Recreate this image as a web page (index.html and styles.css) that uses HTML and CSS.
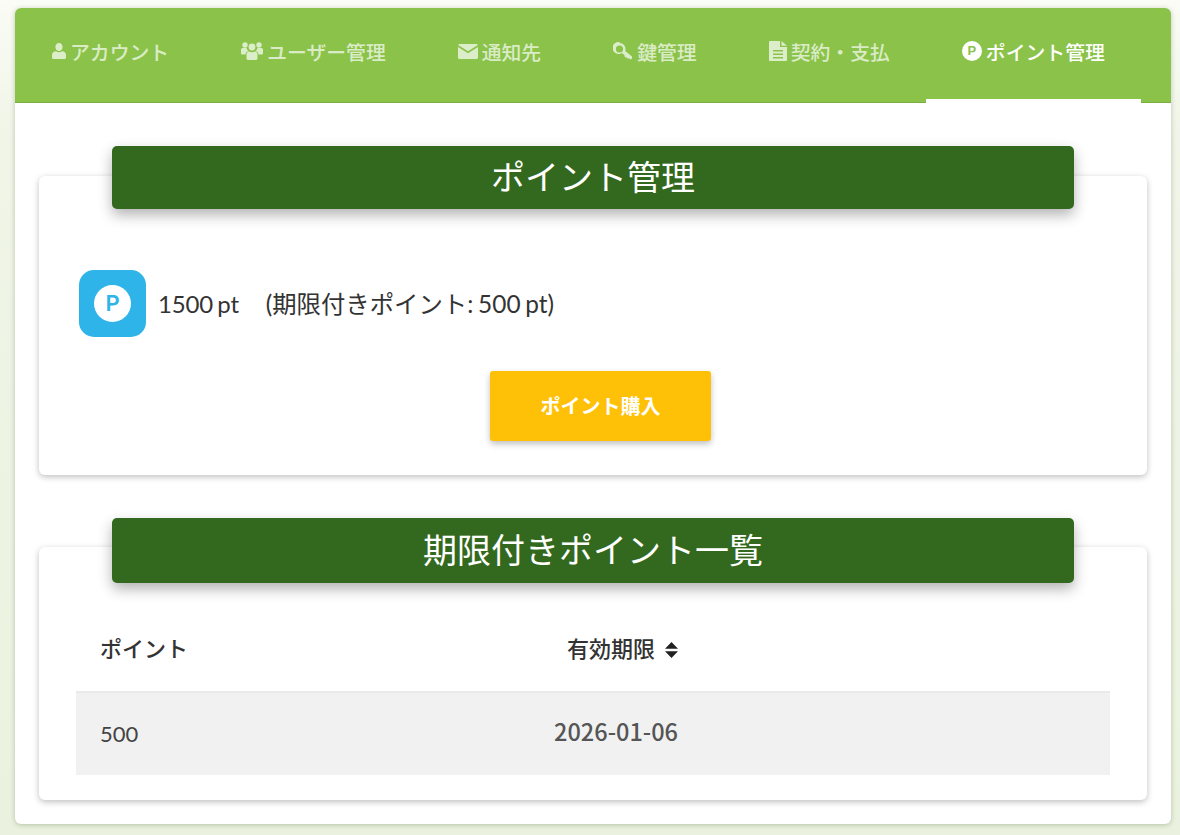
FILE: index.html
```html
<!DOCTYPE html>
<html lang="ja">
<head>
<meta charset="utf-8">
<title>ポイント管理</title>
<link rel="stylesheet" href="styles.css">
</head>
<body>
<div class="panel">
  <nav class="tabs">
    <a class="tab"><svg class="ic ic-user" viewBox="0 0 14 16"><path d="M7 0c2.200 0 3.600 1.700 3.600 4S9.200 8 7 8 3.400 6.300 3.400 4 4.800 0 7 0zM4 8.300c.8.600 1.900 1 3 1s2.200-.4 3-1c2.200.3 4 1.300 4 3.700v2.500c0 .8-.7 1.500-1.500 1.500h-11C.7 16 0 15.300 0 14.500V12c0-2.400 1.800-3.400 4-3.700z"/></svg><span>アカウント</span></a>
    <a class="tab"><svg class="ic ic-group" viewBox="0 0 22 18"><circle cx="11" cy="5" r="3.400"/><circle cx="4" cy="3" r="2.700"/><circle cx="18" cy="3" r="2.700"/><path d="M0 7.500C0 6.500 1 6 2 6h3.500c.4 1.200 1 2.200 2 3-2 .6-3 2-3.100 3.500H1.500C.6 12.500 0 12 0 11zM22 7.500C22 6.500 21 6 20 6h-3.500c-.4 1.200-1 2.200-2 3 2 .6 3 2 3.100 3.500h2.900c.9 0 1.500-.5 1.500-1.500zM8 9.500c1.800 1 4.200 1 6 0 1.600.3 2.500 1.300 2.500 3v3.700c0 1-.8 1.800-1.800 1.800H7.300c-1 0-1.800-.8-1.800-1.800v-3.700c0-1.700.9-2.700 2.500-3z"/></svg><span>ユーザー管理</span></a>
    <a class="tab"><svg class="ic ic-mail" viewBox="0 0 20 15"><path d="M1.500 0h17c.7 0 1.200.4 1.400 1L10 7.300.1 1C.3.400.8 0 1.500 0zM0 3l10 6.300L20 3v10.500c0 .8-.7 1.500-1.500 1.500h-17C.7 15 0 14.300 0 13.500z"/></svg><span>通知先</span></a>
    <a class="tab"><svg class="ic ic-key" viewBox="0 0 20 18"><path fill-rule="evenodd" d="M6.500 1a6 6 0 0 1 5.700 7.900l6.800 5.600v1.900l-1.600 1-1.500-1.200-1 .6-1.200-1.400-.9.300-1.300-1.500-.1-1.300-2.500-2a6 6 0 1 1-2.400-10.900zM6.500 3.400a3.600 3.600 0 1 0 0 7.200 3.600 3.600 0 0 0 0-7.200z"/></svg><span>鍵管理</span></a>
    <a class="tab"><svg class="ic ic-doc" viewBox="0 0 18 20"><path fill-rule="evenodd" d="M1 0h10v6h7v13c0 .6-.4 1-1 1H1c-.6 0-1-.4-1-1V1c0-.6.4-1 1-1zM4 9v1.500h10V9zm0 3.500V14h10v-1.500zM4 16v1.500h10V16zM12.500 0 18 4.700h-5.500z"/></svg><span>契約・支払</span></a>
    <a class="tab tab-active"><span class="ic-p">P</span><span>ポイント管理</span></a>
  </nav>
  <main class="content">
    <section class="block">
      <h2 class="heading heading-first">ポイント管理</h2>
      <div class="card card-first">
        <div class="balance">
          <div class="logo"><span class="logo-p">P</span></div>
          <p class="balance-text">1500 pt　<span class="balance-extra">(期限付きポイント: 500 pt)</span></p>
        </div>
        <div class="actions"><button class="buy">ポイント購入</button></div>
      </div>
    </section>
    <section class="block block-second">
      <h2 class="heading heading-second">期限付きポイント一覧</h2>
      <div class="card card-second">
        <table class="points">
          <thead>
            <tr>
              <th class="col-a">ポイント</th>
              <th class="col-b">有効期限<svg class="sort" viewBox="0 0 13 16"><path d="M6.500 0 13 6.800H0zM0 9.200h13L6.500 16z"/></svg></th>
              <th class="col-c"></th>
            </tr>
          </thead>
          <tbody>
            <tr>
              <td class="col-a val">500</td>
              <td class="col-b date">2026-01-06</td>
              <td class="col-c"></td>
            </tr>
          </tbody>
        </table>
      </div>
    </section>
  </main>
</div>
</body>
</html>
```

FILE: styles.css
```css
* { box-sizing: border-box; }
html, body { height: 100%; }
body {
  margin: 0;
  padding: 8px 9px 11px 15px;
  background: linear-gradient(180deg, #fafcf5 0, #f0f5e7 140px, #eaf2df 100%);
  font-family: "Lato", "Noto Sans CJK JP", sans-serif;
  color: #3d3d3d;
  overflow: hidden;
}
.panel {
  height: 816px;
  background: #fff;
  border-radius: 6px;
  box-shadow: 0 1px 5px rgba(60, 80, 40, .3);
}
.tabs {
  display: flex;
  height: 95px;
  padding-left: 1px;
  background: #8bc34a;
  border-radius: 6px 6px 0 0;
  box-shadow: inset 0 -1px 0 rgba(60, 110, 30, .22);
}
.tab {
  display: flex;
  align-items: center;
  gap: 4px;
  height: 95px;
  padding: 0 36px 9px;
  font-size: 19.84px;
  font-weight: 500;
  color: rgba(255, 255, 255, .7);
  white-space: nowrap;
}
.tab-active {
  color: #fff;
  border-bottom: 4px solid #fff;
  padding-bottom: 5px;
}
.ic { fill: rgba(255, 255, 255, .7); flex: none; }
.ic-user { width: 14px; height: 16px; }
.ic-group { width: 22px; height: 18px; }
.ic-mail { width: 20px; height: 15px; }
.ic-key { width: 20px; height: 18px; }
.ic-doc { width: 18px; height: 20px; }
.ic-p {
  width: 20px;
  height: 20px;
  flex: none;
  border-radius: 50%;
  background: #fff;
  color: #8bc34a;
  font: 700 13px/20px "Liberation Sans", sans-serif;
  text-align: center;
}
.content { padding: 43px 24px 24px; }
.block-second { margin-top: 43px; }
.heading {
  position: relative;
  z-index: 1;
  width: 962px;
  margin: 0 auto;
  background: #33691e;
  color: #fff;
  font-size: 34px;
  font-weight: 400;
  text-align: center;
  border-radius: 5px;
  box-shadow: 0 6px 14px rgba(0, 0, 0, .3);
}
.heading-first { height: 63px; line-height: 62px; margin-bottom: -33px; }
.heading-second { height: 65px; line-height: 63px; margin-bottom: -36px; }
.card {
  background: #fff;
  border-radius: 6px;
  box-shadow: 0 2px 6px rgba(0, 0, 0, .25);
}
.card-first { height: 299px; padding: 94px 40px 0; }
.card-second { height: 253px; padding: 61px 37px 0; }
.balance { display: flex; align-items: center; gap: 12px; }
.logo {
  width: 67px;
  height: 67px;
  border-radius: 15px;
  background: #2fb4e9;
  display: flex;
  align-items: center;
  justify-content: center;
}
.logo-p {
  width: 37px;
  height: 37px;
  border-radius: 50%;
  background: #fff;
  color: #2fb4e9;
  font: 600 22px/37px "Inter", sans-serif;
  text-align: center;
}
.balance-text { margin: 0 0 2px; font-size: 24px; color: #333; letter-spacing: -.2px; word-spacing: -1.5px; }
.balance-extra { font-size: 24.4px; letter-spacing: 0; margin-left: 3px; }
.actions { display: flex; justify-content: center; margin-top: 34px; padding-left: 15px; }
.buy {
  width: 221px;
  height: 70px;
  border: 0;
  border-radius: 3px;
  padding: 0 0 2px;
  background: #ffc107;
  color: #fff;
  font: 700 20px "Lato", "Noto Sans CJK JP", sans-serif;
  box-shadow: 0 3px 6px rgba(0, 0, 0, .25);
}
.points { width: 1034px; border-collapse: collapse; table-layout: fixed; }
.points th, .points td { padding: 0; }
th.col-a { width: 300px; padding-left: 24px; text-align: left; }
td.col-a { padding-left: 24px; }
.col-b { width: 302px; text-align: right; }
.points th {
  height: 84px;
  padding-bottom: 6px;
  border-bottom: 2px solid #e8ebea;
  font-size: 22px;
  font-weight: 500;
  color: #333;
}
.sort { width: 13px; height: 16px; margin-left: 10px; fill: #222; vertical-align: -1px; }
.points td { height: 83px; background: #f1f1f1; font-size: 22px; }
.points td.val { color: #444; padding-bottom: 2px; }
.points td.date {
  padding-bottom: 6px;
  font-family: "Noto Sans CJK JP", sans-serif;
  font-size: 23.5px;
  font-weight: 500;
  color: #555;
}
```
